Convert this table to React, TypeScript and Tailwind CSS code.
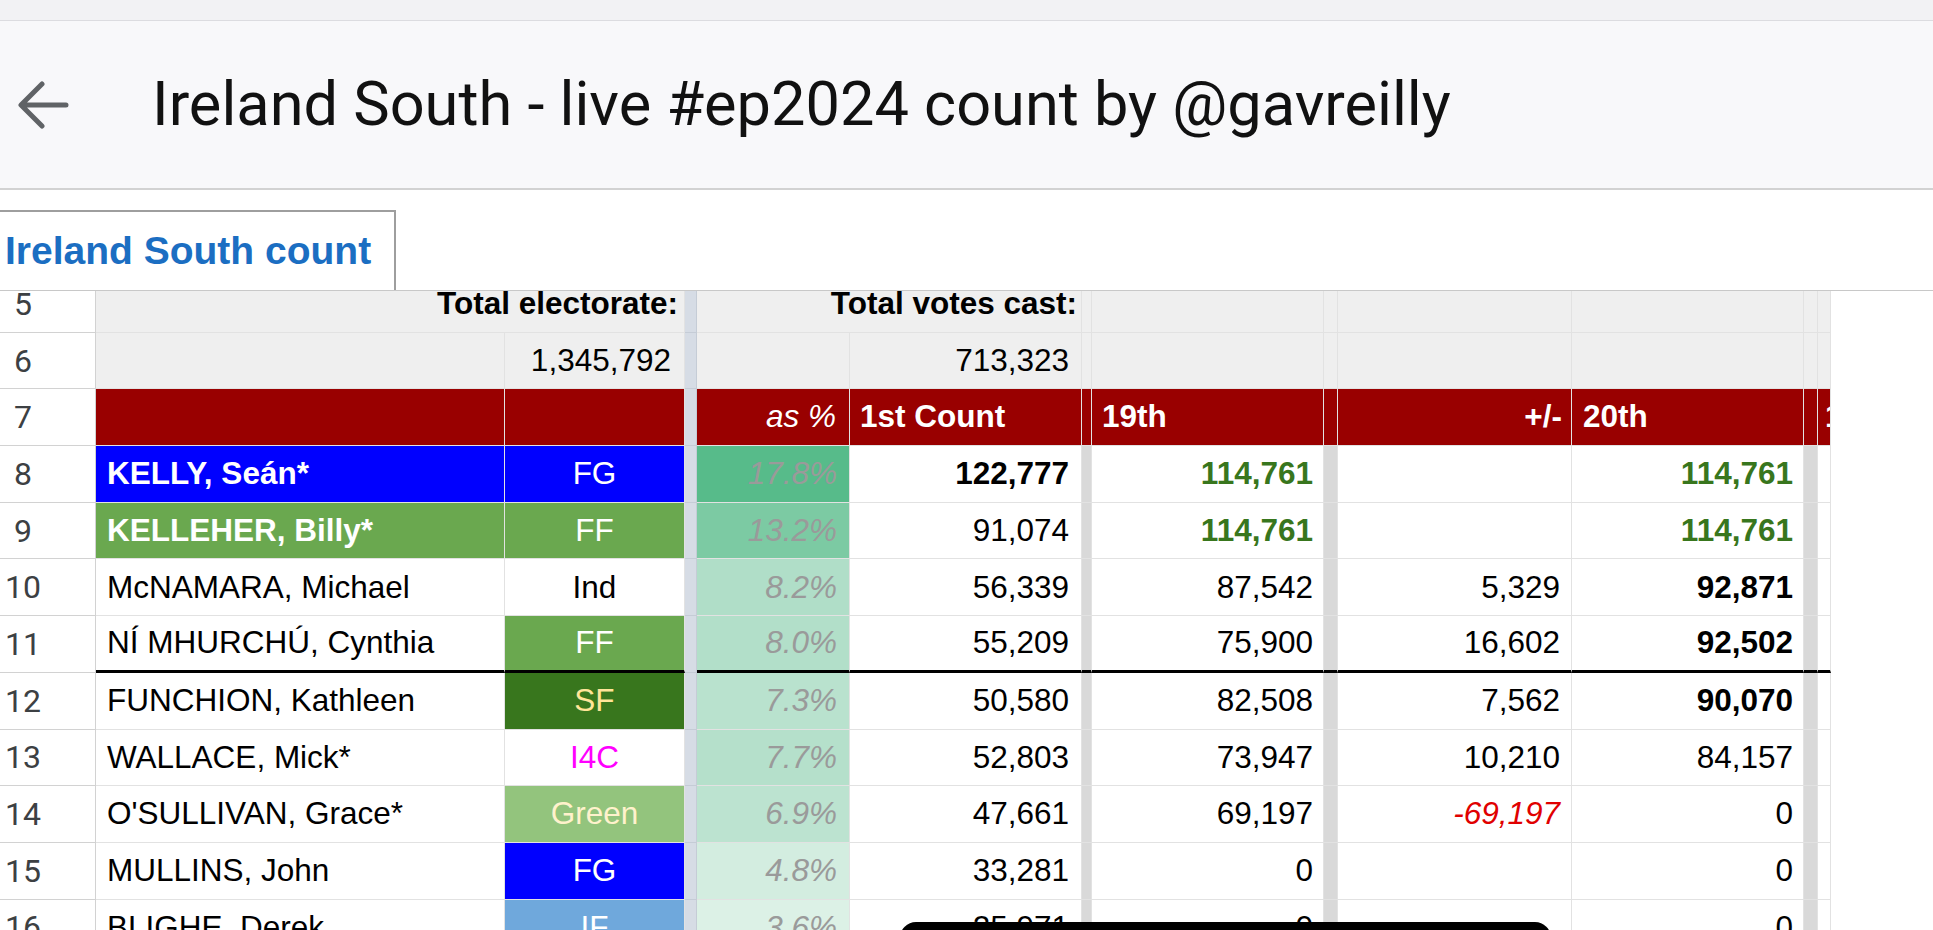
import React from 'react';
import clsx from 'clsx';

const cols =
  'grid grid-cols-[96px_409px_180px_12px_153px_232px_10px_232px_14px_234px_232px_14px_13px] auto-rows-[56.7px] w-[1831px]';

const cell =
  'flex items-center overflow-hidden whitespace-nowrap border-b border-r border-[#e2e2e2] text-[31.5px] leading-none';
const gray = 'bg-[#efefef] border-[#d4d4d4]';
const red = 'bg-[#990000] border-[#870000] text-white font-bold';
const narrow = 'bg-[#d9d9d9] border-[#cacaca]';
const divider = 'bg-[#d6dce5] border-b border-r border-[#c5ccd6]';
const right = 'justify-end pr-3';
const green = 'text-[#38761d] font-bold';

type Row = {
  n: string;
  name: string;
  nameCls: string;
  party: string;
  partyCls: string;
  pct: string;
  pctBg: string;
  first: string;
  firstCls?: string;
  c19: string;
  c19Cls?: string;
  plus: string;
  plusCls?: string;
  c20: string;
  c20Cls?: string;
  line?: boolean;
};

const rows: Row[] = [
  {
    n: '8',
    name: 'KELLY, Seán*',
    nameCls: 'bg-[#0000ff] text-white font-bold border-[#0000e0]',
    party: 'FG',
    partyCls: 'bg-[#0000ff] text-white border-[#0000e0]',
    pct: '17.8%',
    pctBg: 'bg-[#57bb8a]',
    first: '122,777',
    firstCls: 'font-bold',
    c19: '114,761',
    c19Cls: green,
    plus: '',
    c20: '114,761',
    c20Cls: green,
  },
  {
    n: '9',
    name: 'KELLEHER, Billy*',
    nameCls: 'bg-[#6aa84f] text-white font-bold border-[#5e9a45]',
    party: 'FF',
    partyCls: 'bg-[#6aa84f] text-white border-[#5e9a45]',
    pct: '13.2%',
    pctBg: 'bg-[#7ccaa3]',
    first: '91,074',
    c19: '114,761',
    c19Cls: green,
    plus: '',
    c20: '114,761',
    c20Cls: green,
  },
  {
    n: '10',
    name: 'McNAMARA, Michael',
    nameCls: 'bg-white text-black',
    party: 'Ind',
    partyCls: 'bg-white text-black',
    pct: '8.2%',
    pctBg: 'bg-[#b0dec8]',
    first: '56,339',
    c19: '87,542',
    plus: '5,329',
    c20: '92,871',
    c20Cls: 'font-bold',
  },
  {
    n: '11',
    name: 'NÍ MHURCHÚ, Cynthia',
    nameCls: 'bg-white text-black',
    party: 'FF',
    partyCls: 'bg-[#6aa84f] text-white border-[#5e9a45]',
    pct: '8.0%',
    pctBg: 'bg-[#b2dfc9]',
    first: '55,209',
    c19: '75,900',
    plus: '16,602',
    c20: '92,502',
    c20Cls: 'font-bold',
    line: true,
  },
  {
    n: '12',
    name: 'FUNCHION, Kathleen',
    nameCls: 'bg-white text-black',
    party: 'SF',
    partyCls: 'bg-[#38761d] text-[#ffe599] border-[#2f6818]',
    pct: '7.3%',
    pctBg: 'bg-[#b9e2ce]',
    first: '50,580',
    c19: '82,508',
    plus: '7,562',
    c20: '90,070',
    c20Cls: 'font-bold',
  },
  {
    n: '13',
    name: 'WALLACE, Mick*',
    nameCls: 'bg-white text-black',
    party: 'I4C',
    partyCls: 'bg-white text-[#ff00ff]',
    pct: '7.7%',
    pctBg: 'bg-[#b5e0cb]',
    first: '52,803',
    c19: '73,947',
    plus: '10,210',
    c20: '84,157',
  },
  {
    n: '14',
    name: "O'SULLIVAN, Grace*",
    nameCls: 'bg-white text-black',
    party: 'Green',
    partyCls: 'bg-[#93c47d] text-[#fff2cc] border-[#86b870]',
    pct: '6.9%',
    pctBg: 'bg-[#bce3d0]',
    first: '47,661',
    c19: '69,197',
    plus: '-69,197',
    plusCls: 'text-[#e00000] italic',
    c20: '0',
  },
  {
    n: '15',
    name: 'MULLINS, John',
    nameCls: 'bg-white text-black',
    party: 'FG',
    partyCls: 'bg-[#0000ff] text-white border-[#0000e0]',
    pct: '4.8%',
    pctBg: 'bg-[#d3ede0]',
    first: '33,281',
    c19: '0',
    plus: '',
    c20: '0',
  },
  {
    n: '16',
    name: 'BLIGHE, Derek',
    nameCls: 'bg-white text-black',
    party: 'IF',
    partyCls: 'bg-[#6fa8dc] text-white border-[#639bcf]',
    pct: '3.6%',
    pctBg: 'bg-[#dcf1e6]',
    first: '25,971',
    c19: '0',
    plus: '',
    c20: '0',
  },
];

function RowNum({ n, className }: { n: string; className?: string }) {
  return (
    <div
      className={clsx(
        'flex items-center bg-white border-b border-r border-[#d2d2d2] text-[32px] text-[#3c4043] font-["Roboto",sans-serif]',
        className
      )}
    >
      <span className="w-[46px] text-center">{n}</span>
    </div>
  );
}

function DataRow({ r }: { r: Row }) {
  const ln = r.line && 'border-b-[3px] border-b-black';
  return (
    <>
      <RowNum n={r.n} />
      <div className={clsx(cell, 'pl-[11px]', r.nameCls, ln)}>{r.name}</div>
      <div className={clsx(cell, 'justify-center', r.partyCls, ln)}>{r.party}</div>
      <div className={divider} />
      <div className={clsx(cell, right, 'italic text-[#9a9a9a] border-[#9fc9b3]', r.pctBg, ln)}>
        {r.pct}
      </div>
      <div className={clsx(cell, right, 'bg-white', r.firstCls, ln)}>{r.first}</div>
      <div className={clsx(cell, narrow, ln)} />
      <div className={clsx(cell, 'justify-end pr-[10px] bg-white', r.c19Cls, ln)}>{r.c19}</div>
      <div className={clsx(cell, narrow, ln)} />
      <div className={clsx(cell, 'justify-end pr-[11px] bg-white', r.plusCls, ln)}>{r.plus}</div>
      <div className={clsx(cell, 'justify-end pr-[10px] bg-white', r.c20Cls, ln)}>{r.c20}</div>
      <div className={clsx(cell, narrow, ln)} />
      <div className={clsx(cell, 'bg-white', ln)} />
    </>
  );
}

function BackArrow() {
  return (
    <svg width="52" height="48" viewBox="0 0 52 48" fill="none">
      <path
        d="M49 24H5M25 3L4 24l21 21"
        stroke="#606366"
        strokeWidth="5"
        strokeLinecap="round"
        strokeLinejoin="round"
      />
    </svg>
  );
}

export default function App() {
  return (
    <div className="relative w-[1933px] h-[930px] overflow-hidden bg-white flex flex-col font-['Liberation_Sans',Arial,sans-serif]">
      <div className="h-[21px] shrink-0 bg-[#f2f2f4] border-b border-[#dcdce0]" />
      <header className="h-[169px] shrink-0 bg-[#f8f8fa] border-b-2 border-[#d2d2d2] flex items-center">
        <div className="w-[152px] pl-[17px]">
          <BackArrow />
        </div>
        <h1 className="text-[61.3px] leading-none text-[#111] font-['Roboto',sans-serif] whitespace-nowrap">
          Ireland South - live #ep2024 count by @gavreilly
        </h1>
      </header>
      <div className="h-[20px] shrink-0" />
      <div className="h-[80px] shrink-0 flex">
        <div className="w-[396px] border-t-2 border-r-2 border-[#9e9e9e] flex items-center pl-[5px] text-[39px] font-bold text-[#1b6ec2] whitespace-nowrap">
          Ireland South count
        </div>
      </div>
      <div className="flex-1 border-t border-[#c8c8c8] overflow-hidden">
        <div className={clsx(cols, '-mt-[15px]')}>
          {/* row 5 */}
          <RowNum n="5" />
          <div className={clsx(cell, gray, 'col-span-2 justify-end pr-[6px] font-bold text-black')}>
            Total electorate:
          </div>
          <div className={divider} />
          <div className={clsx(cell, gray, 'col-span-2 justify-end pr-[4px] font-bold text-black')}>
            Total votes cast:
          </div>
          <div className={clsx(cell, gray)} />
          <div className={clsx(cell, gray)} />
          <div className={clsx(cell, gray)} />
          <div className={clsx(cell, gray)} />
          <div className={clsx(cell, gray)} />
          <div className={clsx(cell, gray)} />
          <div className={clsx(cell, gray)} />

          {/* row 6 */}
          <RowNum n="6" />
          <div className={clsx(cell, gray)} />
          <div className={clsx(cell, gray, 'justify-end pr-[13px] text-black')}>1,345,792</div>
          <div className={divider} />
          <div className={clsx(cell, gray)} />
          <div className={clsx(cell, gray, 'justify-end pr-[12px] text-black')}>713,323</div>
          <div className={clsx(cell, gray)} />
          <div className={clsx(cell, gray)} />
          <div className={clsx(cell, gray)} />
          <div className={clsx(cell, gray)} />
          <div className={clsx(cell, gray)} />
          <div className={clsx(cell, gray)} />
          <div className={clsx(cell, gray)} />

          {/* row 7 header */}
          <RowNum n="7" />
          <div className={clsx(cell, red)} />
          <div className={clsx(cell, red)} />
          <div className={divider} />
          <div className={clsx(cell, red, 'justify-end pr-[13px] italic font-normal')}>as %</div>
          <div className={clsx(cell, red, 'pl-[10px]')}>1st Count</div>
          <div className={clsx(cell, red)} />
          <div className={clsx(cell, red, 'pl-[10px]')}>19th</div>
          <div className={clsx(cell, red)} />
          <div className={clsx(cell, red, 'justify-end pr-[9px]')}>+/-</div>
          <div className={clsx(cell, red, 'pl-[11px]')}>20th</div>
          <div className={clsx(cell, red)} />
          <div className={clsx(cell, red, 'pl-[7px]')}>1</div>

          {rows.map((r) => (
            <DataRow key={r.n} r={r} />
          ))}
        </div>
      </div>
      <div className="absolute left-[900px] top-[922px] w-[651px] h-[20px] bg-black rounded-t-[16px]" />
    </div>
  );
}
